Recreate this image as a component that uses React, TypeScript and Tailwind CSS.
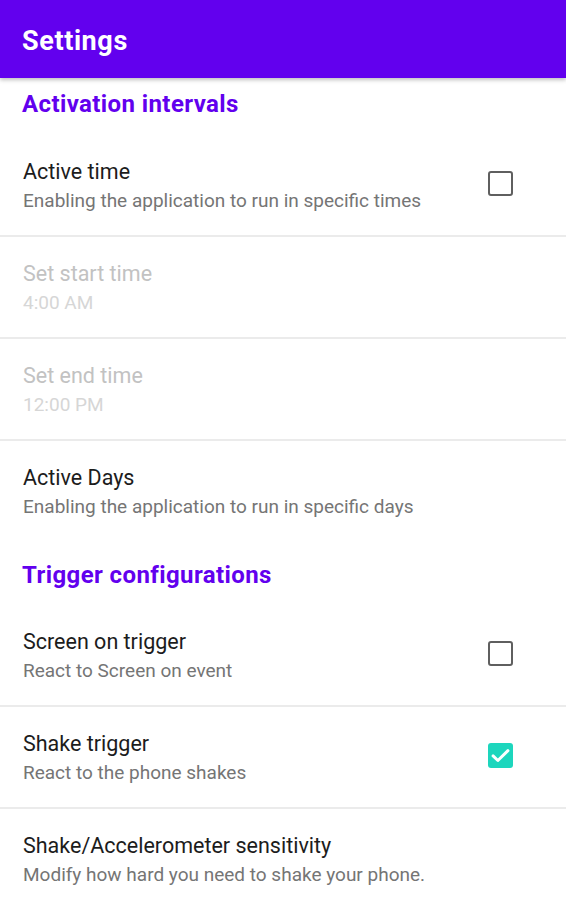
import React from "react";

type Pref = {
    title: string;
    summary: string;
    disabled?: boolean;
    checkbox?: "on" | "off";
    divider?: boolean;
};

const Check = ({ state }: { state: "on" | "off" }) =>
    state === "on" ? (
        <div className="w-[25px] h-[25px] rounded-[3px] bg-[#1dd6bd] flex items-center justify-center">
            <svg width="21" height="21" viewBox="0 0 24 24" fill="none">
                <path d="M3.5 12.5l5.5 5.2L20.5 6.5" stroke="white" strokeWidth="3.4" strokeLinecap="round" strokeLinejoin="round" />
            </svg>
        </div>
    ) : (
        <div className="w-[25px] h-[25px] rounded-[3px] border-[2.5px] border-[#5f5f5f]" />
    );

const Row = ({ p }: { p: Pref }) => (
    <div>
        <div className="h-[100px] flex items-center pl-[23px] pr-[53px]">
            <div className="flex-1 flex flex-col pt-[3px]">
                <span className={p.disabled ? "text-[21.5px] leading-[28px] text-[#c2c2c2]" : "text-[21.5px] leading-[28px] text-[#1c1c1c]"}>
                    {p.title}
                </span>
                <span className={p.disabled ? "text-[19px] leading-[29px] text-[#d6d6d6]" : "text-[19px] leading-[29px] text-[#757575]"}>
                    {p.summary}
                </span>
            </div>
            {p.checkbox && (
                <div className="-mt-[4px]">
                    <Check state={p.checkbox} />
                </div>
            )}
        </div>
        {p.divider && <div className="h-[2px] bg-[#ebebeb]" />}
    </div>
);

const activation: Pref[] = [
    { title: "Active time", summary: "Enabling the application to run in specific times", checkbox: "off", divider: true },
    { title: "Set start time", summary: "4:00 AM", disabled: true, divider: true },
    { title: "Set end time", summary: "12:00 PM", disabled: true, divider: true },
    { title: "Active Days", summary: "Enabling the application to run in specific days" },
];

const triggers: Pref[] = [
    { title: "Screen on trigger", summary: "React to Screen on event", checkbox: "off", divider: true },
    { title: "Shake trigger", summary: "React to the phone shakes", checkbox: "on", divider: true },
    { title: "Shake/Accelerometer sensitivity", summary: "Modify how hard you need to shake your phone." },
];

export default function App() {
    return (
        <div className="w-[566px] h-[900px] bg-white overflow-hidden font-['Roboto',sans-serif] relative">
            <header className="h-[78px] bg-[#6200ee] flex items-center px-[22px] shadow-[0_2px_4px_rgba(0,0,0,0.25)] relative z-10">
                <h1 className="text-[27px] font-bold text-white tracking-[0.6px] mt-[4px]">Settings</h1>
            </header>

            <div className="h-[57px] flex items-start pt-[8px] px-[22px]">
                <span className="text-[24px] font-bold text-[#6200ee] tracking-[0.4px]">Activation intervals</span>
            </div>
            {activation.map((p) => (
                <Row key={p.title} p={p} />
            ))}

            <div className="h-[64px] flex items-center pt-[3px] px-[22px]">
                <span className="text-[24px] font-bold text-[#6200ee] tracking-[0.4px]">Trigger configurations</span>
            </div>
            {triggers.map((p) => (
                <Row key={p.title} p={p} />
            ))}
        </div>
    );
}
